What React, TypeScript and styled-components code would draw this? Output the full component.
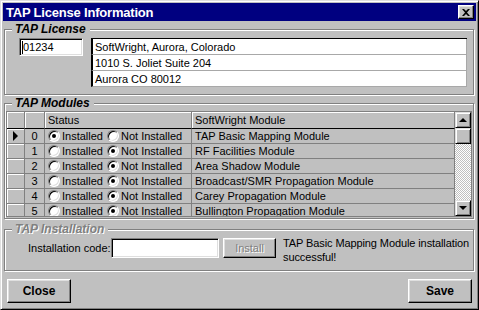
import React from 'react';
import styled, { createGlobalStyle } from 'styled-components';

const GlobalStyle = createGlobalStyle`
  html, body {
    margin: 0;
    padding: 0;
    background: #c0c0c0;
  }
  body {
    font-family: "Liberation Sans", Arial, sans-serif;
    font-size: 11px;
    color: #000;
  }
  * {
    box-sizing: border-box;
  }
`;

const Window = styled.div`
  width: 479px;
  height: 310px;
  background: #c0c0c0;
  border: 1px solid;
  border-color: #dfdfdf #000 #000 #dfdfdf;
  box-shadow: inset 1px 1px #fff, inset -1px -1px #808080;
  padding: 2px;
  display: flex;
  flex-direction: column;
  overflow: hidden;
`;

const TitleBar = styled.div`
  flex-shrink: 0;
  height: 18px;
  background: #000080;
  color: #fff;
  display: flex;
  align-items: center;
  justify-content: space-between;
  padding: 0 2px 0 3px;
  font-weight: bold;
  font-size: 13px;
  letter-spacing: -0.2px;
`;

const TitleButton = styled.div`
  width: 16px;
  height: 14px;
  background: #c0c0c0;
  border: 1px solid;
  border-color: #fff #000 #000 #fff;
  box-shadow: inset -1px -1px #808080, inset 1px 1px #dfdfdf;
  display: flex;
  align-items: center;
  justify-content: center;
`;

const Body = styled.div`
  flex: 1;
  display: flex;
  flex-direction: column;
  padding: 0 2px 0 1px;
`;

const GroupBox = styled.div<{ $top: number }>`
  flex-shrink: 0;
  margin-top: ${(p) => p.$top}px;
  border: 1px solid #808080;
  box-shadow: inset 1px 1px #fff, 1px 1px #fff;
  display: flex;
  flex-direction: column;
`;

const GroupTitle = styled.div<{ $disabled?: boolean }>`
  align-self: flex-start;
  margin: -8px 0 0 7px;
  padding: 0 4px 0 3px;
  background: #c0c0c0;
  font-size: 12px;
  line-height: 14px;
  font-weight: bold;
  font-style: italic;
  color: ${(p) => (p.$disabled ? '#808080' : '#000')};
  text-shadow: ${(p) => (p.$disabled ? '1px 1px #fff' : 'none')};
`;

const LicenseRow = styled.div`
  display: flex;
  align-items: flex-start;
  gap: 8px;
  padding: 2px 6px 7px 14px;
`;

const SunkenField = styled.div<{ $width?: number; $height?: number }>`
  flex-shrink: 0;
  width: ${(p) => (p.$width ? `${p.$width}px` : 'auto')};
  height: ${(p) => p.$height ?? 18}px;
  background: #fff;
  border: 1px solid;
  border-color: #808080 #fff #fff #808080;
  box-shadow: inset 1px 1px #000, inset -1px -1px #dfdfdf;
  display: flex;
  align-items: center;
  padding-left: 2px;
  white-space: nowrap;
`;

const Caret = styled.span`
  width: 1px;
  height: 13px;
  background: #000;
`;

const AddressBox = styled.div`
  flex: 1;
  display: flex;
  flex-direction: column;
  border-top: 1px solid #000;
`;

const AddressLine = styled.div`
  height: 16px;
  background: #fff;
  border-left: 2px solid #000;
  border-right: 1px solid #a8a8a8;
  border-bottom: 1px solid #a8a8a8;
  padding-left: 2px;
  display: flex;
  align-items: center;
`;

const Grid = styled.div`
  margin: 1px;
  border: 1px solid #808080;
  height: 106px;
  display: flex;
  overflow: hidden;
`;

const TableWrap = styled.div`
  flex: 1;
  overflow: hidden;
`;

const Table = styled.table`
  border-collapse: separate;
  border-spacing: 0;
  table-layout: fixed;
  width: 100%;
`;

const HeadCell = styled.th<{ $w?: number }>`
  width: ${(p) => (p.$w ? `${p.$w}px` : 'auto')};
  height: 17px;
  padding: 0 0 0 3px;
  text-align: left;
  font-weight: normal;
  background: #c0c0c0;
  box-shadow: inset 1px 1px #fff;
  border-right: 1px solid #808080;
  border-bottom: 1px solid #000;
  white-space: nowrap;
`;

const RowHeader = styled.td`
  height: 15px;
  padding: 0;
  background: #c0c0c0;
  box-shadow: inset 1px 1px #fff;
  border-right: 1px solid #808080;
  border-bottom: 1px solid #808080;
`;

const Cell = styled.td<{ $center?: boolean }>`
  height: 15px;
  padding: 0 0 0 ${(p) => (p.$center ? 0 : 3)}px;
  text-align: ${(p) => (p.$center ? 'center' : 'left')};
  border-right: 1px solid #808080;
  border-bottom: 1px solid #808080;
  white-space: nowrap;
  overflow: hidden;
`;

const CurrentArrow = styled.div`
  width: 0;
  height: 0;
  margin-left: 6px;
  border-top: 5px solid transparent;
  border-bottom: 5px solid transparent;
  border-left: 5px solid #000;
`;

const StatusGroup = styled.div`
  display: flex;
  align-items: center;
  gap: 4px;
`;

const RadioOption = styled.span`
  display: inline-flex;
  align-items: center;
  gap: 2px;
`;

const Radio = styled.span<{ $checked: boolean }>`
  position: relative;
  width: 12px;
  height: 12px;
  border-radius: 50%;
  background: #fff;
  border: 1px solid;
  border-color: #808080 #fff #fff #808080;
  box-shadow: inset 1px 1px #000, inset -1px -1px #dfdfdf;

  &::after {
    content: '';
    display: ${(p) => (p.$checked ? 'block' : 'none')};
    position: absolute;
    left: 3px;
    top: 3px;
    width: 4px;
    height: 4px;
    border-radius: 50%;
    background: #000;
  }
`;

const ScrollBar = styled.div`
  width: 16px;
  display: flex;
  flex-direction: column;
  background: repeating-conic-gradient(#c0c0c0 0 25%, #fff 0 50%) 0 0 / 2px 2px;
`;

const ScrollButton = styled.div`
  height: 16px;
  background: #c0c0c0;
  border: 1px solid;
  border-color: #dfdfdf #000 #000 #dfdfdf;
  box-shadow: inset 1px 1px #fff, inset -1px -1px #808080;
  display: flex;
  align-items: center;
  justify-content: center;
`;

const ScrollTrack = styled.div`
  flex: 1;
`;

const Triangle = styled.div<{ $down?: boolean }>`
  width: 0;
  height: 0;
  border-left: 4px solid transparent;
  border-right: 4px solid transparent;
  ${(p) => (p.$down ? 'border-top: 4px solid #000;' : 'border-bottom: 4px solid #000;')}
`;

const InstallRow = styled.div`
  display: flex;
  align-items: flex-start;
  padding: 2px 2px 6px 23px;
`;

const InstallLabel = styled.span`
  flex-shrink: 0;
  width: 83px;
  height: 20px;
  line-height: 20px;
  white-space: nowrap;
`;

const Button = styled.button<{ $bold?: boolean; $width: number; $height: number }>`
  flex-shrink: 0;
  width: ${(p) => p.$width}px;
  height: ${(p) => p.$height}px;
  background: #c0c0c0;
  border: 1px solid;
  border-color: #fff #000 #000 #fff;
  box-shadow: inset -1px -1px #808080, inset 1px 1px #dfdfdf;
  font-family: "Liberation Sans", Arial, sans-serif;
  font-size: ${(p) => (p.$bold ? 12 : 11)}px;
  font-weight: ${(p) => (p.$bold ? 'bold' : 'normal')};
  color: #000;
  padding: 0;

  &:disabled {
    color: #808080;
    text-shadow: 1px 1px #fff;
  }
`;

const InstallButton = styled(Button)`
  margin-left: 4px;
`;

const Message = styled.div`
  flex: 1;
  height: 28px;
  margin: -2px 0 0 7px;
  line-height: 14px;
  letter-spacing: -0.1px;
`;

const Footer = styled.div`
  display: flex;
  justify-content: space-between;
  margin-top: 8px;
  padding: 0 2px 0 3px;
`;

const modules = [
  { id: 0, installed: true, name: 'TAP Basic Mapping Module' },
  { id: 1, installed: false, name: 'RF Facilities Module' },
  { id: 2, installed: false, name: 'Area Shadow Module' },
  { id: 3, installed: false, name: 'Broadcast/SMR Propagation Module' },
  { id: 4, installed: false, name: 'Carey Propagation Module' },
  { id: 5, installed: false, name: 'Bullington Propagation Module' },
];

const CloseGlyph = () => (
  <svg width="8" height="7" viewBox="0 0 8 7">
    <path d="M0 0h2l2 2 2-2h2L5 3.5 8 7H6L4 5 2 7H0l3-3.5z" fill="#000" />
  </svg>
);

export default function App() {
  return (
    <Window>
      <GlobalStyle />
      <TitleBar>
        <span>TAP License Information</span>
        <TitleButton>
          <CloseGlyph />
        </TitleButton>
      </TitleBar>
      <Body>
        <GroupBox $top={8}>
          <GroupTitle>TAP License</GroupTitle>
          <LicenseRow>
            <SunkenField $width={64}>
              <Caret />
              01234
            </SunkenField>
            <AddressBox>
              <AddressLine>SoftWright, Aurora, Colorado</AddressLine>
              <AddressLine>1010 S. Joliet Suite 204</AddressLine>
              <AddressLine>Aurora CO 80012</AddressLine>
            </AddressBox>
          </LicenseRow>
        </GroupBox>

        <GroupBox $top={8}>
          <GroupTitle>TAP Modules</GroupTitle>
          <Grid>
            <TableWrap>
              <Table>
                <thead>
                  <tr>
                    <HeadCell $w={18} />
                    <HeadCell $w={20} />
                    <HeadCell $w={147}>Status</HeadCell>
                    <HeadCell>SoftWright Module</HeadCell>
                  </tr>
                </thead>
                <tbody>
                  {modules.map((m) => (
                    <tr key={m.id}>
                      <RowHeader>{m.id === 0 && <CurrentArrow />}</RowHeader>
                      <Cell $center>{m.id}</Cell>
                      <Cell>
                        <StatusGroup>
                          <RadioOption>
                            <Radio $checked={m.installed} />
                            Installed
                          </RadioOption>
                          <RadioOption>
                            <Radio $checked={!m.installed} />
                            Not Installed
                          </RadioOption>
                        </StatusGroup>
                      </Cell>
                      <Cell>{m.name}</Cell>
                    </tr>
                  ))}
                </tbody>
              </Table>
            </TableWrap>
            <ScrollBar>
              <ScrollButton>
                <Triangle />
              </ScrollButton>
              <ScrollButton />
              <ScrollTrack />
              <ScrollButton>
                <Triangle $down />
              </ScrollButton>
            </ScrollBar>
          </Grid>
        </GroupBox>

        <GroupBox $top={10}>
          <GroupTitle $disabled>TAP Installation</GroupTitle>
          <InstallRow>
            <InstallLabel>Installation code:</InstallLabel>
            <SunkenField $width={108} $height={20} />
            <InstallButton $width={53} $height={20} disabled>
              Install
            </InstallButton>
            <Message>TAP Basic Mapping Module installation successful!</Message>
          </InstallRow>
        </GroupBox>

        <Footer>
          <Button $bold $width={64} $height={24}>Close</Button>
          <Button $bold $width={64} $height={24}>Save</Button>
        </Footer>
      </Body>
    </Window>
  );
}
